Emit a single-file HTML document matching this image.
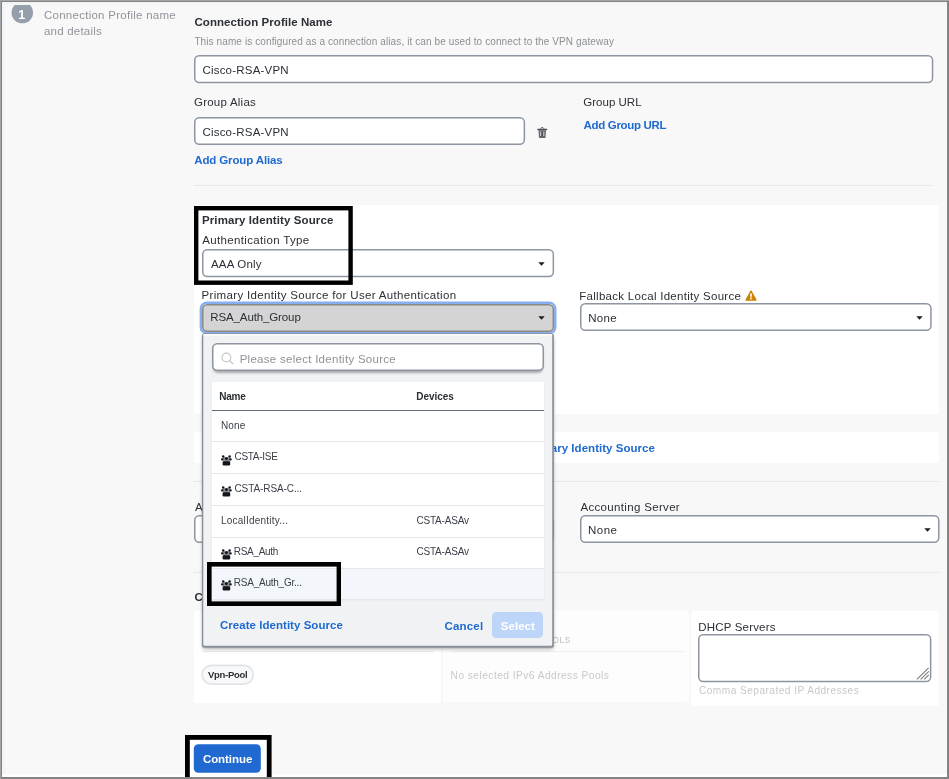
<!DOCTYPE html>
<html><head><meta charset="utf-8">
<style>
*{box-sizing:border-box;margin:0;padding:0}
html,body{width:949px;height:779px;overflow:hidden;background:#f8f8f8}
body{font-family:"Liberation Sans",sans-serif;position:relative}
.abs{position:absolute}
.t{position:absolute;white-space:nowrap;line-height:20px;height:20px}
.inp{position:absolute;background:#fff;border:1.300px solid #8c96a2;border-radius:5px}
.hr{position:absolute;height:1px;background:#e8e8e8}
.card{position:absolute;background:#fff;border-radius:3px}
.box{position:absolute;border:4.700px solid #000;z-index:40}
#w{position:absolute;left:0;top:0;width:949px;height:779px;will-change:transform}
</style></head><body><div id="w">

<svg class="abs" style="left:10px;top:0" width="26" height="26" viewBox="10 0 26 26"><clipPath id="cc"><rect x="10" y="4.300" width="26" height="22"/></clipPath><circle cx="22.300" cy="12.600" r="10.750" fill="#959fab" clip-path="url(#cc)"/></svg>
<svg class="abs" style="left:193.70px;top:54.80px;overflow:visible" width="739.30" height="28.20"><rect x="0.750" y="0.750" width="737.80" height="26.70" rx="4.500" fill="#fff" stroke="#8c95a1" stroke-width="1.500"/></svg>
<svg class="abs" style="left:193.70px;top:116.90px;overflow:visible" width="331.10" height="28.00"><rect x="0.750" y="0.750" width="329.60" height="26.50" rx="4.500" fill="#fff" stroke="#8c95a1" stroke-width="1.500"/></svg>
<svg class="abs" style="left:537px;top:126.500px" width="10.500" height="11.500" viewBox="0 0 10.500 11.500"><path d="M3.700 1.700c0-.7.500-1.100 1.500-1.100s1.500.4 1.500 1.100" fill="none" stroke="#4a4d52" stroke-width="1"/><path d="M0.400 2.500h9.700" stroke="#4a4d52" stroke-width="1.500"/><path d="M1.500 3.200l.4 6.700c0 .6.400 1 1 1h4.700c.6 0 1-.4 1-1l.4-6.700z" fill="#63666b"/><path d="M3.700 4.600v4.400M6.800 4.600v4.400" stroke="#dcdcdc" stroke-width="1"/><path d="M5.250 4.400v4.800" stroke="#3a3d42" stroke-width=".8"/></svg>
<div class="hr" style="left:194px;top:185px;width:738.500px"></div>
<div class="card" style="left:194px;top:205px;width:745.200px;height:208.800px"></div>
<div class="card" style="left:194px;top:432.400px;width:745.200px;height:30.900px"></div>
<div class="hr" style="left:194px;top:481px;width:745px"></div>
<div class="hr" style="left:194px;top:571.500px;width:745px"></div>
<div class="card" style="left:194.100px;top:611.400px;width:247.200px;height:91.500px"></div>
<div class="card" style="left:442.900px;top:611px;width:245.800px;height:90.700px;background:#fdfdfd"></div>
<div class="card" style="left:690.500px;top:611.300px;width:248.800px;height:94.800px"></div>
<div class="hr" style="left:202px;top:651px;width:232px;background:#ededed"></div>
<div class="hr" style="left:450.500px;top:651px;width:232px;background:#ededed"></div>
<svg class="abs" style="left:201.50px;top:248.70px;overflow:visible" width="352.10" height="28.20"><rect x="0.750" y="0.750" width="350.60" height="26.70" rx="4.500" fill="#fff" stroke="#8c95a1" stroke-width="1.500"/></svg>
<svg class="abs" style="left:538.3px;top:262.0px;" width="7" height="4" viewBox="0 0 7 4"><path d="M0.300 0.200h6.400L3.500 3.800z" fill="#1d1d1f"/></svg>
<svg class="abs" style="left:201.50px;top:303.50px;overflow:visible" width="352.10" height="28.00"><rect x="-1.200" y="-1.200" width="354.500" height="30.400" rx="6" fill="none" stroke="#86aef0" stroke-width="2.400"/><rect x="0.750" y="0.750" width="350.60" height="26.50" rx="4.500" fill="#d4d4d4" stroke="#8b8782" stroke-width="1.500"/></svg>
<svg class="abs" style="left:538.3px;top:316.2px;" width="7" height="4" viewBox="0 0 7 4"><path d="M0.300 0.200h6.400L3.500 3.800z" fill="#1d1d1f"/></svg>
<svg class="abs" style="left:579.80px;top:303.40px;overflow:visible" width="351.70" height="28.10"><rect x="0.750" y="0.750" width="350.20" height="26.60" rx="4.500" fill="#fff" stroke="#8c95a1" stroke-width="1.500"/></svg>
<svg class="abs" style="left:916.2px;top:316.2px;" width="7" height="4" viewBox="0 0 7 4"><path d="M0.300 0.200h6.400L3.500 3.800z" fill="#1d1d1f"/></svg>
<svg class="abs" style="left:744.700px;top:289.600px" width="12" height="11" viewBox="0 0 12 11"><path d="M6 1L11 10H1z" fill="#cc8400" stroke="#cc8400" stroke-width="1.400" stroke-linejoin="round"/><path d="M6 3.500v3.200" stroke="#fff" stroke-width="1.700"/><rect x="5.150" y="7.600" width="1.700" height="1.700" fill="#fff"/></svg>
<svg class="abs" style="left:193.50px;top:515.10px;overflow:visible" width="360.10" height="28.10"><rect x="0.750" y="0.750" width="358.60" height="26.60" rx="4.500" fill="#fff" stroke="#8c95a1" stroke-width="1.500"/></svg>
<svg class="abs" style="left:579.70px;top:515.10px;overflow:visible" width="359.50" height="28.10"><rect x="0.750" y="0.750" width="358.00" height="26.60" rx="4.500" fill="#fff" stroke="#8c95a1" stroke-width="1.500"/></svg>
<svg class="abs" style="left:924.1px;top:528.3px;" width="7" height="4" viewBox="0 0 7 4"><path d="M0.300 0.200h6.400L3.500 3.800z" fill="#1d1d1f"/></svg>
<svg class="abs" style="left:200px;top:663px" width="56" height="24" viewBox="200 663 56 24"><rect x="202.100" y="665.400" width="51.200" height="18.700" rx="9.350" fill="#f8f9fa" stroke="#e1e3e6" stroke-width="1.600"/></svg>
<svg class="abs" style="left:698.10px;top:634.20px;overflow:visible" width="233.40" height="48.30"><rect x="0.750" y="0.750" width="231.90" height="46.80" rx="4.500" fill="#fff" stroke="#8c95a1" stroke-width="1.500"/></svg>
<svg class="abs" style="left:916px;top:667px" width="14" height="14" viewBox="916 667 14 14"><path d="M917 679.300L928.600 667.900M920.600 679.400L928.800 671.300M924.200 679.400L928.800 674.800" stroke="#7c7c7c" stroke-width="1.100"/></svg>
<div class="abs" style="left:188px;top:738px;width:81px;height:40px;background:#fff"></div>
<svg class="abs" style="left:193px;top:744px" width="69" height="30" viewBox="193 744 69 30"><rect x="193.800" y="744.300" width="67" height="28.400" rx="4.500" fill="#1f69d0"/></svg>
<div class="abs" style="left:2px;top:773.500px;width:945px;height:4px;background:#fff"></div>
<div class="t" id="num" style="top:5px;font-size:12.6px;color:#fff;letter-spacing:0.000px;left:18.31px;font-weight:bold;">1</div>
<div class="t" id="s1" style="top:5px;font-size:11.5px;color:#90959b;letter-spacing:0.267px;left:43.94px;">Connection Profile name</div>
<div class="t" id="s2" style="top:21px;font-size:11.5px;color:#90959b;letter-spacing:0.208px;left:44.03px;">and details</div>
<div class="t" id="title" style="top:12px;font-size:11.5px;color:#2b2f36;letter-spacing:0.057px;left:194.48px;font-weight:bold;">Connection Profile Name</div>
<div class="t" id="help" style="top:32px;font-size:10.0px;color:#8b8f94;letter-spacing:0.103px;left:194.41px;">This name is configured as a connection alias, it can be used to connect to the VPN gateway</div>
<div class="t" id="in1" style="top:60px;font-size:11.5px;color:#2b2f36;letter-spacing:0.213px;left:202.41px;">Cisco-RSA-VPN</div>
<div class="t" id="ga" style="top:92px;font-size:11.5px;color:#2b2f36;letter-spacing:0.234px;left:194.00px;">Group Alias</div>
<div class="t" id="in2" style="top:122px;font-size:11.5px;color:#2b2f36;letter-spacing:0.213px;left:202.41px;">Cisco-RSA-VPN</div>
<div class="t" id="aga" style="top:150px;font-size:11.5px;color:#1f6ad1;letter-spacing:-0.133px;left:194.27px;font-weight:bold;">Add Group Alias</div>
<div class="t" id="gu" style="top:92px;font-size:11.5px;color:#2b2f36;letter-spacing:0.015px;left:583.27px;">Group URL</div>
<div class="t" id="agu" style="top:115px;font-size:11.5px;color:#1f6ad1;letter-spacing:-0.304px;left:583.41px;font-weight:bold;">Add Group URL</div>
<div class="t" id="pis" style="top:210px;font-size:11.5px;color:#2b2f36;letter-spacing:0.101px;left:201.99px;font-weight:bold;">Primary Identity Source</div>
<div class="t" id="at" style="top:230px;font-size:11.5px;color:#2b2f36;letter-spacing:0.350px;left:202.15px;">Authentication Type</div>
<div class="t" id="aaa" style="top:254px;font-size:11.5px;color:#2b2f36;letter-spacing:0.180px;left:211.00px;">AAA Only</div>
<div class="t" id="pisu" style="top:285px;font-size:11.5px;color:#2b2f36;letter-spacing:0.336px;left:201.54px;">Primary Identity Source for User Authentication</div>
<div class="t" id="rsa" style="top:307px;font-size:11.5px;color:#2b2f36;letter-spacing:-0.119px;left:210.28px;">RSA_Auth_Group</div>
<div class="t" id="fb" style="top:286px;font-size:11.5px;color:#2b2f36;letter-spacing:0.281px;left:579.29px;">Fallback Local Identity Source</div>
<div class="t" id="none1" style="top:308px;font-size:11.5px;color:#2b2f36;letter-spacing:0.320px;left:588.15px;">None</div>
<div class="t" id="sec" style="top:438px;font-size:11.5px;color:#1f6ad1;letter-spacing:0.034px;right:294.07px;font-weight:bold;">Add Secondary Identity Source</div>
<div class="t" id="auz" style="top:497px;font-size:11.5px;color:#2b2f36;letter-spacing:0.330px;left:194.88px;">Authorization Server</div>
<div class="t" id="acc" style="top:497px;font-size:11.5px;color:#2b2f36;letter-spacing:0.330px;left:580.44px;">Accounting Server</div>
<div class="t" id="none2" style="top:520px;font-size:11.5px;color:#2b2f36;letter-spacing:0.481px;left:588.08px;">None</div>
<div class="t" id="cap" style="top:587px;font-size:11.5px;color:#2b2f36;letter-spacing:0.101px;left:194.58px;font-weight:bold;">Client Address Pool Assignment</div>
<div class="t" id="v4" style="top:630px;font-size:8.5px;color:#bdbdbd;letter-spacing:0.600px;left:202.33px;">IPV4 ADDRESS POOLS</div>
<div class="t" id="v6" style="top:630px;font-size:8.5px;color:#bdbdbd;letter-spacing:0.600px;right:377.86px;">IPV6 ADDRESS POOLS</div>
<div class="t" id="vpn" style="top:665px;font-size:9.5px;color:#2b2f36;letter-spacing:-0.286px;left:207.93px;font-weight:bold;">Vpn-Pool</div>
<div class="t" id="nosel" style="top:666px;font-size:10.2px;color:#c9c9c9;letter-spacing:0.458px;left:450.59px;">No selected IPv6 Address Pools</div>
<div class="t" id="dhcp" style="top:617px;font-size:11.5px;color:#2b2f36;letter-spacing:0.177px;left:698.29px;">DHCP Servers</div>
<div class="t" id="comma" style="top:681px;font-size:10.2px;color:#c9c9c9;letter-spacing:0.431px;left:698.96px;">Comma Separated IP Addresses</div>
<div class="t" id="cont" style="top:749px;font-size:11.5px;color:#fff;letter-spacing:-0.064px;left:202.91px;font-weight:bold;">Continue</div>
<div class="abs" style="left:203px;top:336px;width:350px;height:311px;box-shadow:0 1.500px 4px rgba(0,0,0,.3),0 0 3px rgba(0,0,0,.15);z-index:20"></div>
<svg class="abs" style="left:200px;top:332px;z-index:20" width="356" height="318" viewBox="200 332 356 318"><rect x="201.900" y="333.300" width="352" height="314.500" rx="2.500" fill="#8a9099"/><rect x="203.300" y="334.100" width="348.900" height="311.700" rx="1.500" fill="#f1f2f4"/><rect x="203.300" y="334.100" width="348.900" height="1.600" fill="#fff" opacity=".9"/></svg>
<div class="abs" style="left:213px;top:345px;width:330px;height:26px;border-radius:5px;box-shadow:0 1.500px 2.500px rgba(0,0,0,.3);z-index:21"></div>
<svg class="abs" style="left:212.00px;top:343.00px;overflow:visible;z-index:21" width="332.00" height="28.10"><rect x="0.750" y="0.750" width="330.50" height="26.60" rx="4.500" fill="#fff" stroke="#8c95a1" stroke-width="1.500"/></svg>
<svg class="abs" style="left:221.400px;top:352.400px;z-index:21" width="13" height="13" viewBox="0 0 13 13"><circle cx="5.400" cy="5.400" r="4.350" fill="none" stroke="#c3c6ca" stroke-width="1.200"/><path d="M8.500 8.500L12 12" stroke="#c3c6ca" stroke-width="1.300"/></svg>
<div class="abs" style="left:212.300px;top:381.700px;width:331.400px;height:217.700px;background:#fff;box-shadow:0 1px 2px rgba(0,0,0,.08);z-index:21"></div>
<div class="abs" style="left:212.300px;top:568.500px;width:331.400px;height:30.900px;background:#f3f6fa;z-index:21"></div>
<div class="abs" style="left:212.300px;top:409.700px;width:331.400px;height:1.500px;background:#5f6b7a;z-index:21"></div>
<div class="hr" style="left:212.300px;top:441.0px;width:331.400px;background:#e6e7e9;z-index:21"></div>
<div class="hr" style="left:212.300px;top:472.6px;width:331.400px;background:#e6e7e9;z-index:21"></div>
<div class="hr" style="left:212.300px;top:504.6px;width:331.400px;background:#e6e7e9;z-index:21"></div>
<div class="hr" style="left:212.300px;top:536.6px;width:331.400px;background:#e6e7e9;z-index:21"></div>
<div class="hr" style="left:212.300px;top:567.8px;width:331.400px;background:#e6e7e9;z-index:21"></div>
<svg class="abs" style="left:220.800px;top:454.5px;z-index:21" width="11" height="11" viewBox="0 0 11 11"><path d="M2.300 2.200h6.400v4.800h-6.400z" fill="#8a8f98"/><circle cx="2.200" cy="1.400" r="1.250" fill="#14161c"/><circle cx="8.600" cy="1.400" r="1.250" fill="#14161c"/><rect x="0.100" y="3.300" width="2.500" height="2.100" rx=".7" fill="#14161c"/><rect x="8.200" y="3.300" width="2.500" height="2.100" rx=".7" fill="#14161c"/><ellipse cx="5.400" cy="3.600" rx="1.450" ry="1.550" fill="#14161c"/><rect x="1.600" y="6.300" width="7.600" height="4.100" rx="1.200" fill="#14161c"/></svg>
<svg class="abs" style="left:220.800px;top:486.4px;z-index:21" width="11" height="11" viewBox="0 0 11 11"><path d="M2.300 2.200h6.400v4.800h-6.400z" fill="#8a8f98"/><circle cx="2.200" cy="1.400" r="1.250" fill="#14161c"/><circle cx="8.600" cy="1.400" r="1.250" fill="#14161c"/><rect x="0.100" y="3.300" width="2.500" height="2.100" rx=".7" fill="#14161c"/><rect x="8.200" y="3.300" width="2.500" height="2.100" rx=".7" fill="#14161c"/><ellipse cx="5.400" cy="3.600" rx="1.450" ry="1.550" fill="#14161c"/><rect x="1.600" y="6.300" width="7.600" height="4.100" rx="1.200" fill="#14161c"/></svg>
<svg class="abs" style="left:220.800px;top:549.3px;z-index:21" width="11" height="11" viewBox="0 0 11 11"><path d="M2.300 2.200h6.400v4.800h-6.400z" fill="#8a8f98"/><circle cx="2.200" cy="1.400" r="1.250" fill="#14161c"/><circle cx="8.600" cy="1.400" r="1.250" fill="#14161c"/><rect x="0.100" y="3.300" width="2.500" height="2.100" rx=".7" fill="#14161c"/><rect x="8.200" y="3.300" width="2.500" height="2.100" rx=".7" fill="#14161c"/><ellipse cx="5.400" cy="3.600" rx="1.450" ry="1.550" fill="#14161c"/><rect x="1.600" y="6.300" width="7.600" height="4.100" rx="1.200" fill="#14161c"/></svg>
<svg class="abs" style="left:220.800px;top:580.2px;z-index:21" width="11" height="11" viewBox="0 0 11 11"><path d="M2.300 2.200h6.400v4.800h-6.400z" fill="#8a8f98"/><circle cx="2.200" cy="1.400" r="1.250" fill="#14161c"/><circle cx="8.600" cy="1.400" r="1.250" fill="#14161c"/><rect x="0.100" y="3.300" width="2.500" height="2.100" rx=".7" fill="#14161c"/><rect x="8.200" y="3.300" width="2.500" height="2.100" rx=".7" fill="#14161c"/><ellipse cx="5.400" cy="3.600" rx="1.450" ry="1.550" fill="#14161c"/><rect x="1.600" y="6.300" width="7.600" height="4.100" rx="1.200" fill="#14161c"/></svg>
<div class="abs" style="left:491.700px;top:611.600px;width:51.600px;height:26.200px;background:#bdd5f9;border-radius:4.500px;z-index:21"></div>
<div class="t" id="ph" style="top:349px;font-size:11.5px;color:#8e9196;letter-spacing:0.277px;left:239.68px;z-index:22;">Please select Identity Source</div>
<div class="t" id="hn" style="top:387px;font-size:10.0px;color:#2b2f36;letter-spacing:-0.174px;left:219.17px;font-weight:bold;z-index:22;">Name</div>
<div class="t" id="hd" style="top:387px;font-size:10.0px;color:#2b2f36;letter-spacing:-0.061px;left:416.25px;font-weight:bold;z-index:22;">Devices</div>
<div class="t" id="r1" style="top:416px;font-size:10.0px;color:#3a3f47;letter-spacing:0.118px;left:220.96px;z-index:22;">None</div>
<div class="t" id="r2" style="top:447px;font-size:10.0px;color:#3a3f47;letter-spacing:-0.286px;left:234.47px;z-index:22;">CSTA-ISE</div>
<div class="t" id="r3" style="top:479px;font-size:10.0px;color:#3a3f47;letter-spacing:-0.095px;left:234.47px;z-index:22;">CSTA-RSA-C...</div>
<div class="t" id="r4" style="top:511px;font-size:10.0px;color:#3a3f47;letter-spacing:0.228px;left:220.89px;z-index:22;">LocalIdentity...</div>
<div class="t" id="r5" style="top:542px;font-size:10.0px;color:#3a3f47;letter-spacing:-0.311px;left:233.79px;z-index:22;">RSA_Auth</div>
<div class="t" id="r6" style="top:573px;font-size:10.0px;color:#3a3f47;letter-spacing:-0.232px;left:233.79px;z-index:22;">RSA_Auth_Gr...</div>
<div class="t" id="d4" style="top:511px;font-size:10.0px;color:#3a3f47;letter-spacing:-0.179px;left:416.38px;z-index:22;">CSTA-ASAv</div>
<div class="t" id="d5" style="top:542px;font-size:10.0px;color:#3a3f47;letter-spacing:-0.179px;left:416.38px;z-index:22;">CSTA-ASAv</div>
<div class="t" id="cis" style="top:615px;font-size:11.5px;color:#1f6ad1;letter-spacing:0.034px;left:220.02px;font-weight:bold;z-index:22;">Create Identity Source</div>
<div class="t" id="cancel" style="top:616px;font-size:11.5px;color:#1f6ad1;letter-spacing:0.165px;left:444.58px;font-weight:bold;z-index:22;">Cancel</div>
<div class="t" id="select" style="top:616px;font-size:11.5px;color:#fff;letter-spacing:0.031px;left:500.81px;font-weight:bold;z-index:22;">Select</div>
<svg class="abs" style="left:194.30px;top:206.30px;z-index:40" width="158.80" height="78.90"><rect x="2.20" y="2.20" width="154.40" height="74.50" fill="none" stroke="#000" stroke-width="4.40"/></svg>
<svg class="abs" style="left:207.00px;top:562.10px;z-index:40" width="134.20" height="44.00"><rect x="2.30" y="2.30" width="129.60" height="39.40" fill="none" stroke="#000" stroke-width="4.60"/></svg>
<svg class="abs" style="left:185.20px;top:735.20px;z-index:40" width="86.60" height="54.80"><rect x="2.40" y="2.40" width="81.80" height="50.00" fill="none" stroke="#000" stroke-width="4.80"/></svg>
<div class="abs" style="left:2px;top:2px;width:945px;height:3px;background:#f2f4f6;z-index:49"></div>
<div class="abs" style="left:2px;top:2px;width:3px;height:772px;background:#f2f4f6;z-index:49"></div>
<div class="abs" style="left:0;top:0;width:949px;height:779px;border:2px solid #838383;z-index:50"></div>
<div class="abs" style="left:0;top:0;width:949px;height:1px;background:#a6a6a6;z-index:51"></div>
<div class="abs" style="left:0;top:0;width:1px;height:779px;background:#a3a3a3;z-index:51"></div>
</div></body></html>
